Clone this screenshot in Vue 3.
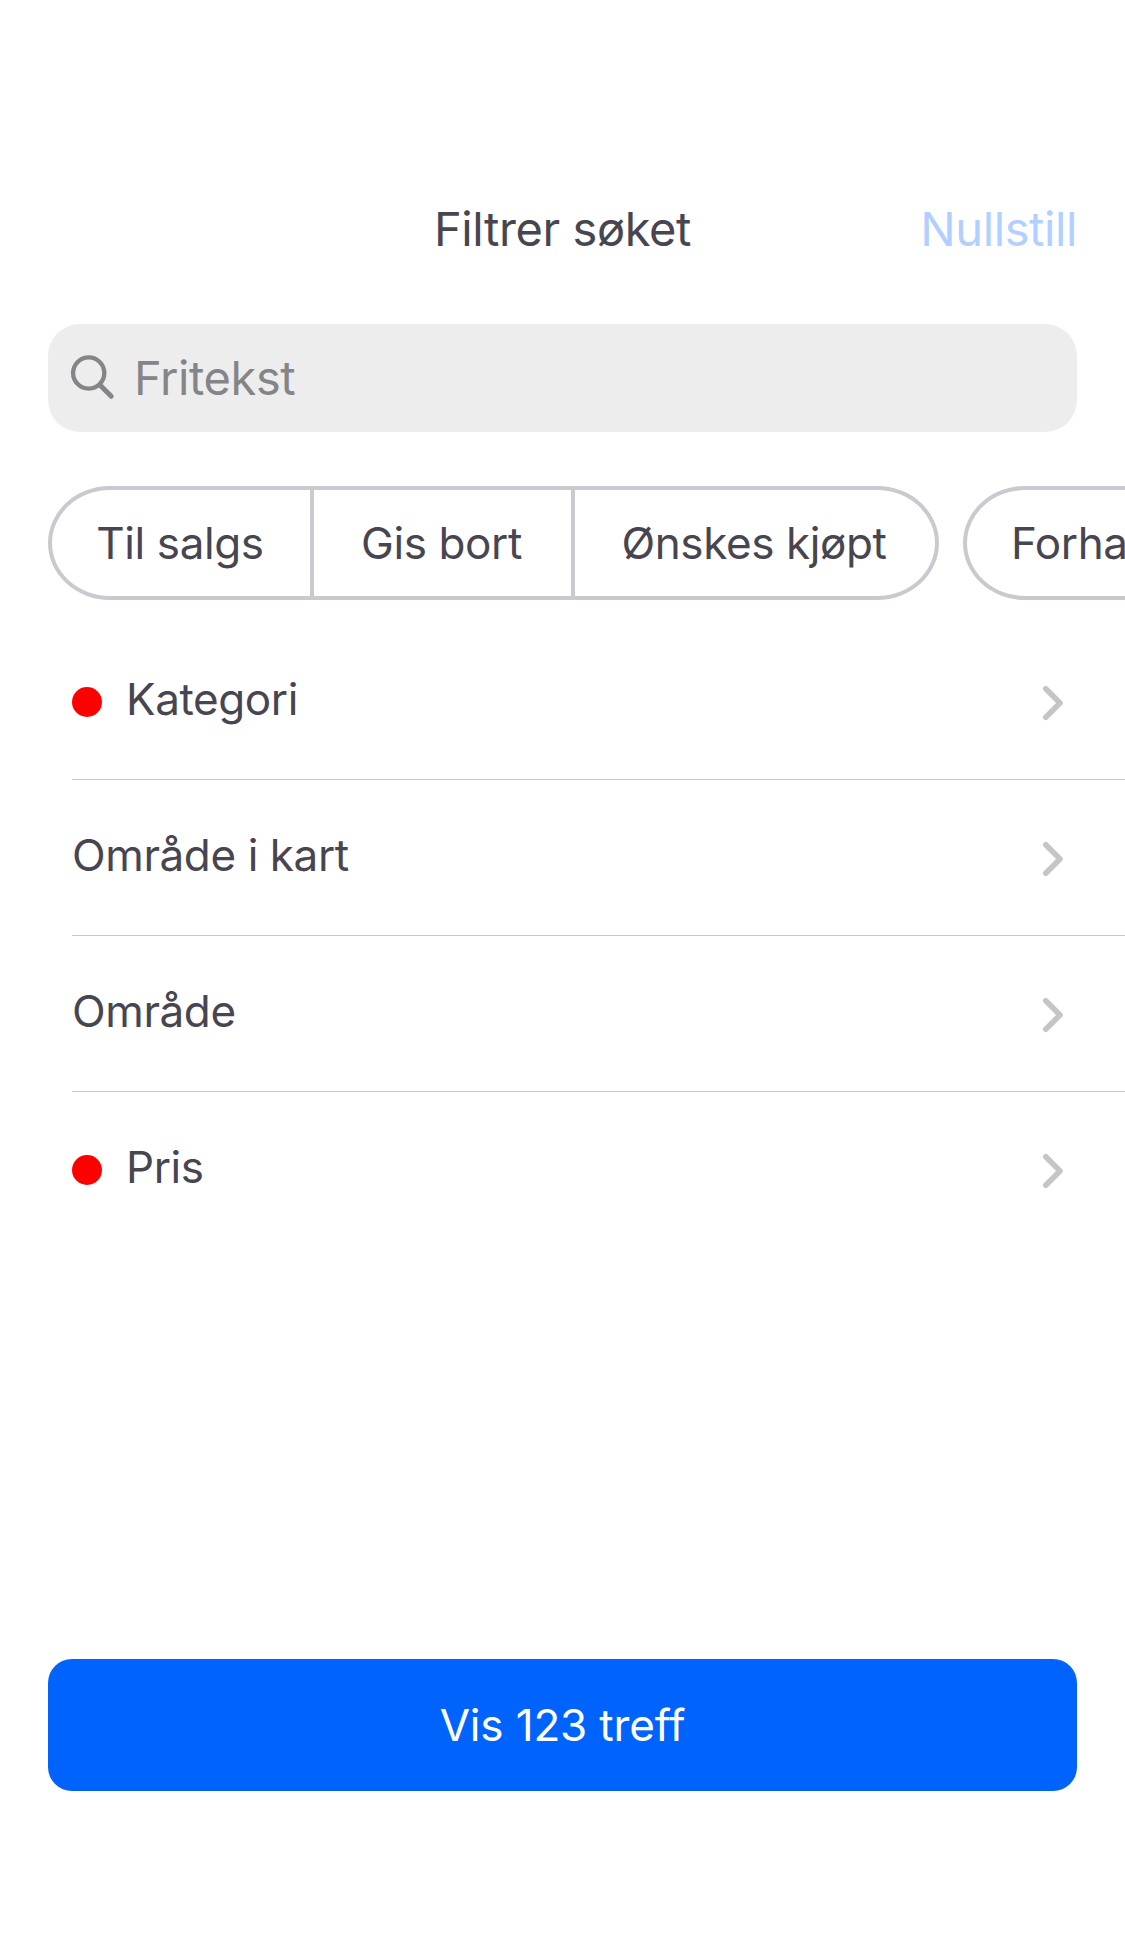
<script setup>
const segments = [
  { label: 'Til salgs', width: 258 },
  { label: 'Gis bort', width: 261 },
  { label: 'Ønskes kjøpt', width: 364 },
]
const filters = [
  { label: 'Kategori', active: true },
  { label: 'Område i kart', active: false },
  { label: 'Område', active: false },
  { label: 'Pris', active: true },
]
</script>

<template>
  <main class="screen">
    <header class="bar">
      <h1 class="title">Filtrer søket</h1>
      <button class="reset">Nullstill</button>
    </header>

    <label class="search">
      <svg class="glass" width="48" height="48" viewBox="0 0 48 48">
        <circle cx="20.7" cy="19" r="15.6" />
        <path class="handle" d="M32 31 43.2 42.3" />
      </svg>
      <span class="hint">Fritekst</span>
    </label>

    <div class="chips">
      <div class="group">
        <button
          v-for="s in segments"
          :key="s.label"
          class="segment"
          :style="{ width: s.width + 'px' }"
        >{{ s.label }}</button>
      </div>
      <div class="group">
        <button class="segment single">Forhandler</button>
      </div>
    </div>

    <ul class="list">
      <li v-for="f in filters" :key="f.label" class="row">
        <i v-if="f.active" class="dot"></i>
        <span class="label">{{ f.label }}</span>
        <svg class="chevron" width="24" height="38" viewBox="0 0 24 38">
          <path d="M4.8 4.8 19 19 4.8 33.2" />
        </svg>
      </li>
    </ul>

    <button class="submit">Vis 123 treff</button>
  </main>
</template>

<style>
body {
  margin: 0;
  background: #fff;
}
</style>

<style scoped>
.screen {
  box-sizing: border-box;
  display: flex;
  flex-direction: column;
  width: 1125px;
  height: 1941px;
  padding: 180px 0 150px 48px;
  overflow: hidden;
  background: #fff;
  color: #474650;
  font-family: Inter, "Liberation Sans", sans-serif;
  font-size: 44px;
  letter-spacing: -0.4px;
}
button {
  padding: 0;
  border: 0;
  background: none;
  color: inherit;
  font: inherit;
  letter-spacing: inherit;
}
.bar {
  display: grid;
  grid-template-columns: 1fr auto 1fr;
  align-items: center;
  height: 96px;
  margin-right: 48px;
}
.title {
  grid-column: 2;
  margin: 0;
  font-size: 47px;
  font-weight: 400;
}
.reset {
  justify-self: end;
  color: #b1d0ff;
  font-size: 47px;
}
.search {
  display: flex;
  align-items: center;
  height: 108px;
  margin: 48px 48px 0 0;
  border-radius: 32px;
  background: #ededed;
  color: #858589;
  font-size: 47px;
}
.glass {
  margin-left: 20px;
  fill: none;
  stroke: #858589;
  stroke-width: 4.3;
  stroke-linecap: round;
}
.handle {
  stroke-width: 5;
}
.hint {
  margin-left: 18px;
  padding-bottom: 2px;
}
.chips {
  display: flex;
  gap: 24px;
  height: 114px;
  margin-top: 54px;
}
.group {
  display: flex;
  flex: none;
  box-sizing: border-box;
  border: 4px solid #c9c9d0;
  border-radius: 62px / 57px;
}
.segment {
  box-sizing: border-box;
  padding-right: 2px;
}
.segment + .segment {
  border-left: 4px solid #c9c9d0;
}
.single {
  padding: 0 46px 0 44px;
}
.list {
  margin: 24px 0 0 24px;
  padding: 0;
  list-style: none;
}
.row {
  box-sizing: border-box;
  display: flex;
  align-items: center;
  height: 156px;
  padding-right: 60px;
  border-bottom: 1px solid #c8c7cc;
}
.row:last-child {
  border-bottom-color: transparent;
}
.dot {
  width: 30px;
  height: 30px;
  margin: 1px 24px 0 0;
  border-radius: 50%;
  background: #f00;
}
.label {
  padding-bottom: 5px;
}
.chevron {
  margin: 3px 0 0 auto;
  fill: none;
  stroke: #c5c5c7;
  stroke-width: 5.6;
  stroke-linecap: round;
  stroke-linejoin: round;
}
.submit {
  height: 132px;
  margin: auto 48px 0 0;
  border-radius: 24px;
  background: #0063fb;
  color: #fff;
  letter-spacing: -0.15px;
}
</style>
